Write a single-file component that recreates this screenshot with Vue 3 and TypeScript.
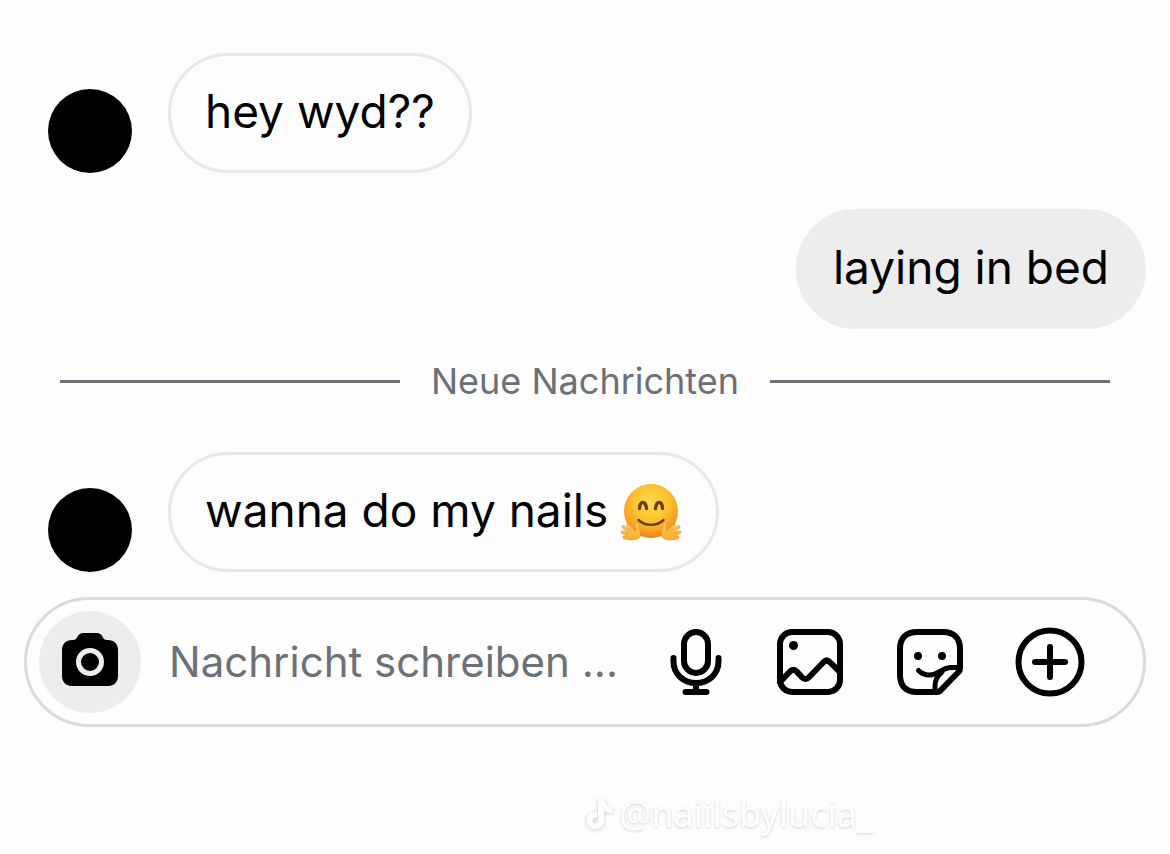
<script setup lang="ts">
import { ref } from 'vue'

interface Message {
  id: number
  text: string
  own: boolean
  hug?: boolean
}

const earlier: Message[] = [
  { id: 1, text: 'hey wyd??', own: false },
  { id: 2, text: 'laying in bed', own: true },
]
const recent: Message[] = [{ id: 3, text: 'wanna do my nails', own: false, hug: true }]

const draft = ref('')
</script>

<template>
  <main class="chat">
    <section class="thread">
      <div v-for="m in earlier" :key="m.id" class="row" :class="{ own: m.own }">
        <span v-if="!m.own" class="avatar"></span>
        <p class="bubble">{{ m.text }}</p>
      </div>

      <div class="divider"><span>Neue Nachrichten</span></div>

      <div v-for="m in recent" :key="m.id" class="row">
        <span class="avatar"></span>
        <p class="bubble">
          <span>{{ m.text }}</span>
          <svg v-if="m.hug" class="emoji" viewBox="0 0 62 60" role="img" aria-label="🤗">
            <defs>
              <radialGradient id="face" cx="50%" cy="36%" r="62%">
                <stop offset="0" stop-color="#ffdc50" />
                <stop offset="0.5" stop-color="#ffc430" />
                <stop offset="0.85" stop-color="#fb9f22" />
                <stop offset="1" stop-color="#ec861c" />
              </radialGradient>
              <linearGradient id="hand" x1="0" y1="0" x2="0" y2="1">
                <stop offset="0" stop-color="#ffcb52" />
                <stop offset="1" stop-color="#f7ad34" />
              </linearGradient>
            </defs>
            <circle cx="31" cy="28" r="27" fill="url(#face)" />
            <g fill="none" stroke="#6a3d05" stroke-linecap="round">
              <path d="M19.500 25.500c.5-8 6-8 7 0" stroke-width="3.400" />
              <path d="M35.500 25.500c1-8 6.500-8 7 0" stroke-width="3.400" />
              <path d="M18.500 37c7 6.500 18 6.500 25 0" stroke-width="2.400" />
            </g>
            <path
              d="M19 55c-5 3-11 2-15 .5-2-.8-1.500-2.500.5-2.500l3 0-5.500-2.500c-2-1-1-3 1-2.300l5 1.800-5.500-5c-1.500-1.600.4-3.200 2-2l6 4.500-3.500-4.500c-1-1.700 1-2.800 2.300-1.400l6 6.500c1-2-.5-5 .2-7.500.6-2 3-1.600 3.300.4.600 4 3.700 10.500.2 14z"
              fill="url(#hand)" stroke="#e58a1c" stroke-width="0.600"
            />
            <g transform="translate(62 0) scale(-1 1)">
              <path
                d="M19 55c-5 3-11 2-15 .5-2-.8-1.500-2.500.5-2.500l3 0-5.500-2.500c-2-1-1-3 1-2.300l5 1.800-5.500-5c-1.500-1.600.4-3.200 2-2l6 4.500-3.500-4.500c-1-1.700 1-2.800 2.300-1.400l6 6.500c1-2-.5-5 .2-7.500.6-2 3-1.600 3.300.4.600 4 3.700 10.500.2 14z"
                fill="url(#hand)" stroke="#e58a1c" stroke-width="0.600"
              />
            </g>
          </svg>
        </p>
      </div>
    </section>

    <form class="composer" @submit.prevent>
      <button type="button" class="camera" aria-label="Kamera">
        <svg viewBox="0 0 56 54" width="56" height="54">
          <path
            d="M22 0h12c4 0 6 2 7 4.500.6 1.500 1.500 2.500 4 2.500h1c6 0 10 4 10 10v26c0 6-4 10-10 10H10C4 53 0 49 0 43V17C0 11 4 7 10 7h1c2.500 0 3.400-1 4-2.500C16 2 18 0 22 0z"
          />
          <circle cx="28" cy="29" r="11.500" fill="none" stroke="#ededed" stroke-width="5" />
        </svg>
      </button>
      <input v-model="draft" type="text" placeholder="Nachricht schreiben ..." aria-label="Nachricht schreiben" />
      <div class="tools">
        <button type="button" aria-label="Sprachnachricht">
          <svg viewBox="0 0 60 72" width="60" height="72">
            <rect x="18" y="6" width="24" height="41" rx="12" />
            <path d="M7.500 32v3.500C7.500 48 17.500 57 30 57s22.500-9 22.500-21.500V32M30 57v8M19.500 66h21" />
          </svg>
        </button>
        <button type="button" aria-label="Bild">
          <svg viewBox="0 0 72 72" width="72" height="72">
            <rect x="6" y="6" width="60" height="60" rx="12" />
            <circle class="dot" cx="19.500" cy="19.500" r="4.500" />
            <path d="M6 56l10-10.500c2.200-2.500 4.500-2.500 6.700 0l5.500 6c2 2 4.500 2 6.500 0l15-15.500c2-2 4-2 6 0L66 46" />
          </svg>
        </button>
        <button type="button" aria-label="Sticker">
          <svg viewBox="0 0 72 72" width="72" height="72">
            <path d="M43 66H23C12 66 6 60 6 49V23C6 12 12 6 23 6h26c11 0 17 6 17 17v19.500c0 1.500-.5 2.500-1.500 3.500L47 64c-1 1.300-2 2-4 2z" />
            <path class="fold" d="M24.500 44.500c3 3 7 4.500 11 4.500 9 0 12-7.500 22-7.500H66" />
            <path class="fold" d="M41 65v-5c0-6 2-10 7-14" />
            <circle class="dot" cx="24" cy="30" r="4" />
            <circle class="dot" cx="48" cy="30" r="4" />
          </svg>
        </button>
        <button type="button" aria-label="Mehr">
          <svg viewBox="0 0 72 72" width="72" height="72">
            <circle cx="36" cy="36" r="31.500" />
            <path d="M36 21v30M21 36h30" />
          </svg>
        </button>
      </div>
    </form>

    <footer class="credit">
      <svg viewBox="0 0 30 34" width="30" height="34" aria-hidden="true">
        <path d="M13 2h6c.5 5 3.500 8 8 8.500v5.500c-3 0-6-1-8-2.500v9.500c0 6-4 9-9 9s-8-4-8-8.500c0-5.500 4.500-9 10-8.500v5.500c-2.500-.5-4.500.8-4.500 3 0 2 1.500 3.300 3 3.300S13 25.500 13 23z" />
      </svg>
      <span>@naiilsbylucia_</span>
    </footer>
  </main>
</template>

<style>
body {
  margin: 0;
  background: #fdfdfd;
}
</style>

<style scoped>
.chat {
  box-sizing: border-box;
  min-height: 100vh;
  padding: 53px 24px 12px;
  background: #fdfdfd;
  color: #000;
  font-family: Inter, "Liberation Sans", sans-serif;
}
.thread {
  display: flex;
  flex-direction: column;
}
.row {
  display: flex;
  align-items: flex-end;
  gap: 36px;
  padding-left: 24px;
}
.row.own {
  justify-content: flex-end;
  margin-top: 36px;
}
.avatar {
  flex: none;
  width: 84px;
  height: 84px;
  border-radius: 50%;
  background: #000;
}
.bubble {
  box-sizing: border-box;
  display: flex;
  align-items: center;
  gap: 12px;
  margin: 0;
  padding: 28px 34px 32px;
  border: 3px solid #e8e8e8;
  border-radius: 60px;
  font-size: 46px;
  line-height: 54px;
}
.own .bubble {
  border-color: #ededed;
  background: #ededed;
}
.emoji {
  flex: none;
  width: 62px;
  height: 60px;
  margin-bottom: -6px;
}
.divider {
  display: flex;
  align-items: center;
  gap: 31px;
  margin: 28px 36px 47px;
  color: #6c6f76;
  font-size: 36px;
  line-height: 48px;
}
.divider::before,
.divider::after {
  content: "";
  flex: 1;
  height: 3px;
  background: #716f7a;
}
.composer {
  display: flex;
  align-items: center;
  margin-top: 25px;
  padding: 11px 57px 11px 12px;
  border: 3px solid #dadada;
  border-radius: 66px;
}
button {
  display: flex;
  align-items: center;
  justify-content: center;
  padding: 0;
  border: 0;
  background: none;
  color: inherit;
}
.camera {
  flex: none;
  box-sizing: border-box;
  width: 102px;
  height: 102px;
  padding-bottom: 4px;
  border-radius: 50%;
  background: #ededed;
}
input {
  flex: 1;
  min-width: 0;
  margin: 0 24px 0 28px;
  padding: 0;
  border: 0;
  outline: 0;
  background: none;
  color: #000;
  font-family: inherit;
  font-size: 42px;
  line-height: 54px;
}
input::placeholder {
  color: #6c7077;
  opacity: 1;
}
.tools {
  display: flex;
  gap: 48px;
}
.tools svg {
  fill: none;
  stroke: #000;
  stroke-width: 6;
  stroke-linecap: round;
  stroke-linejoin: round;
}
.tools .fold {
  stroke-width: 5;
}
.tools .dot {
  fill: #000;
  stroke: none;
}
.credit {
  display: flex;
  align-items: center;
  justify-content: center;
  gap: 4px;
  margin-top: 64px;
  padding-left: 338px;
  padding-right: 50px;
  color: #fff;
  font-family: "Noto Sans", sans-serif;
  font-size: 36px;
  line-height: 46px;
  text-shadow: 0 1px 3px #d2d2d2;
}
.credit svg {
  fill: #fff;
  filter: drop-shadow(0 1px 2px #cccccc);
}
</style>
